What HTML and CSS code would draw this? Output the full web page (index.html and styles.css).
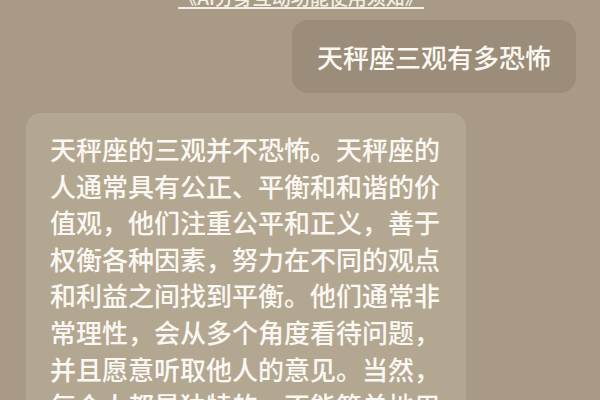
FILE: index.html
```html
<!DOCTYPE html>
<html lang="zh-CN">
<head>
<meta charset="utf-8">
<title>AI分身</title>
<link rel="stylesheet" href="styles.css">
</head>
<body>
<div class="chat">
  <div class="notice"><a class="notice-link" href="#">《AI分身互动功能使用须知》</a></div>
  <div class="row row-user">
    <div class="bubble bubble-user">天秤座三观有多恐怖</div>
  </div>
  <div class="row row-ai">
    <div class="bubble bubble-ai">天秤座的三观并不恐怖。天秤座的人通常具有公正、平衡和和谐的价值观，他们注重公平和正义，善于权衡各种因素，努力在不同的观点和利益之间找到平衡。他们通常非常理性，会从多个角度看待问题，并且愿意听取他人的意见。当然，每个人都是独特的，不能简单地用星座来概括一个人的三观。</div>
  </div>
</div>
</body>
</html>
```

FILE: styles.css
```css
html, body {
  margin: 0;
  padding: 0;
  width: 600px;
  height: 400px;
  overflow: hidden;
  background: #a89a85;
  font-family: "Noto Sans CJK SC", "Noto Sans", sans-serif;
}

.chat {
  display: flex;
  flex-direction: column;
  padding: 0 24px 0 26px;
}

.notice {
  display: flex;
  justify-content: center;
  margin-top: -13px;
  height: 20px;
  line-height: 20px;
  font-size: 19px;
  font-weight: 500;
}

.notice-link {
  color: #f4efe6;
  text-decoration: underline;
  text-decoration-thickness: 2px;
  text-underline-offset: 2px;
}

.row {
  display: flex;
}

.row-user {
  justify-content: flex-end;
  margin-top: 13px;
}

.row-ai {
  justify-content: flex-start;
  margin-top: 20px;
}

.bubble {
  font-size: 26px;
  font-weight: 500;
  color: #fbf8f3;
}

.bubble-user {
  background: #9b8d79;
  border-radius: 16px;
  height: 73px;
  box-sizing: border-box;
  padding: 0 24px;
  display: flex;
  align-items: center;
  line-height: 1;
  width: 284px;
  justify-content: center;
}

.bubble-ai {
  background: #b4a791;
  border-radius: 15px;
  width: 440px;
  box-sizing: border-box;
  padding: 18px 24px 20px 24px;
  line-height: 36.6px;
}
```
